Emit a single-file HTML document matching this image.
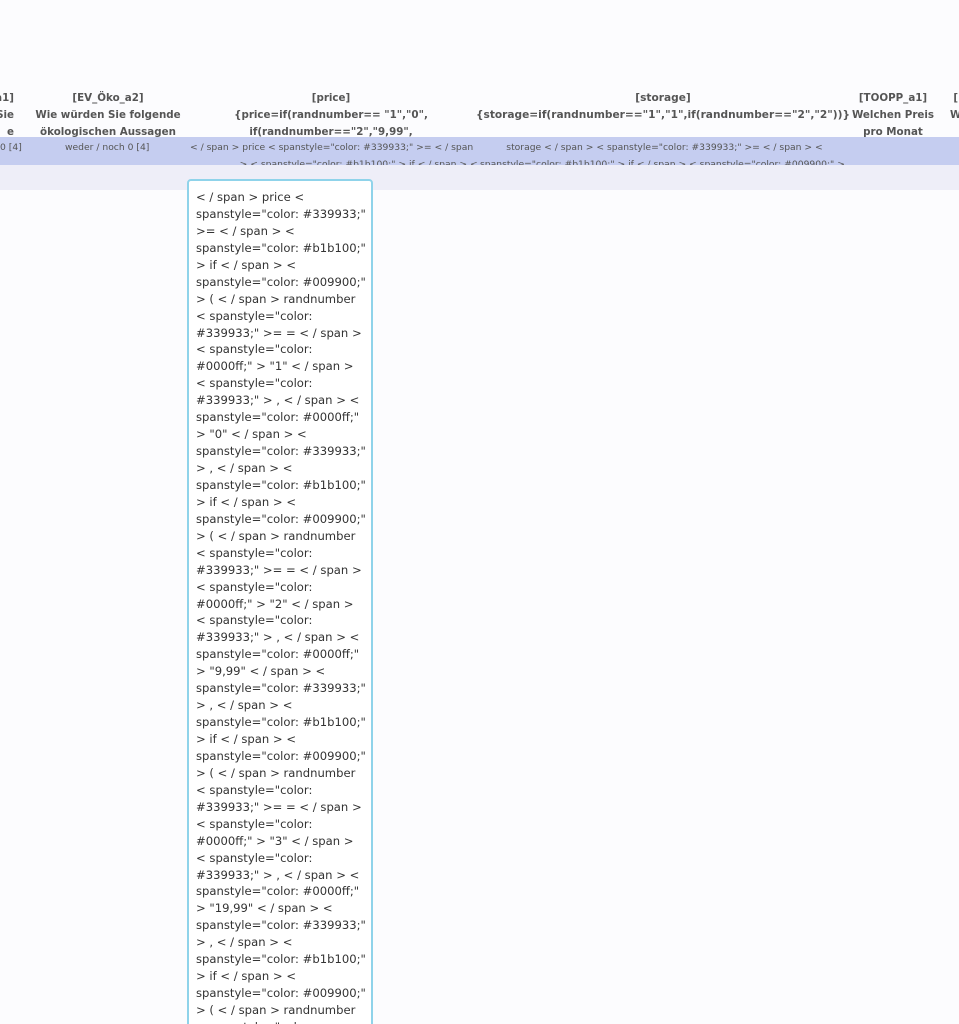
<!DOCTYPE html>
<html style="overflow:hidden;height:1024px"><head><meta charset="utf-8">
<style>
body{margin:0;width:959px;height:1024px;overflow:hidden;background:#fcfcfe;font-family:"DejaVu Sans","Liberation Sans",sans-serif;position:relative}
.h{position:absolute;font-weight:bold;font-size:10.3px;color:#555;text-align:center;line-height:17px;white-space:nowrap;transform:translateX(-50%)}
.blue{position:absolute;left:0;top:137px;width:959px;height:28px;background:#c5cdf0;overflow:hidden}
.lav{position:absolute;left:0;top:165px;width:959px;height:25px;background:#eeeef8}
.c{position:absolute;font-size:9.2px;color:#555;line-height:17px;white-space:nowrap;top:2px}
.tip{position:absolute;left:187px;top:179px;width:186px;height:860px;background:#fff;border:2px solid #8fd3ea;border-radius:4px;box-sizing:border-box;padding:8px 0 0 7px;font-size:11.6px;line-height:16.94px;color:#333;white-space:nowrap;overflow:hidden}
</style></head><body>
<div class="h" style="top:90px;text-align:right;transform:none;left:-20px;width:34px">a1]<br>Sie<br>e</div>
<div class="h" style="left:108px;top:90px">[EV_Öko_a2]<br>Wie würden Sie folgende<br>ökologischen Aussagen</div>
<div class="h" style="left:331px;top:90px">[price]<br>{price=if(randnumber== "1","0",<br>if(randnumber=="2","9,99",</div>
<div class="h" style="left:663px;top:90px;font-size:10.6px">[storage]<br>{storage=if(randnumber=="1","1",if(randnumber=="2","2"))}</div>
<div class="h" style="left:893px;top:90px">[TOOPP_a1]<br>Welchen Preis<br>pro Monat</div>
<div class="h" style="left:950px;top:90px;transform:none">[<br>W</div>
<div class="blue">
<div class="c" style="left:0">0 [4]</div>
<div class="c" style="left:65px">weder / noch 0 [4]</div>
<div class="c" style="left:190px">&lt; / span &gt; price &lt; spanstyle="color: #339933;" &gt;= &lt; / span<br>&nbsp;&nbsp;&nbsp;&nbsp;&nbsp;&nbsp;&nbsp;&nbsp;&nbsp;&nbsp;&nbsp;&nbsp;&nbsp;&nbsp;&nbsp;&nbsp;&nbsp;&gt; &lt; spanstyle="color: #b1b100;" &gt; if &lt; / span &gt; &lt;</div>
<div class="c" style="left:480px">&nbsp;&nbsp;&nbsp;&nbsp;&nbsp;&nbsp;&nbsp;&nbsp;&nbsp;storage &lt; / span &gt; &lt; spanstyle="color: #339933;" &gt;= &lt; / span &gt; &lt;<br>spanstyle="color: #b1b100;" &gt; if &lt; / span &gt; &lt; spanstyle="color: #009900;" &gt;</div>
</div>
<div class="lav"></div>
<div class="tip">&lt; / span &gt; price &lt;<br>spanstyle="color: #339933;"<br>&gt;= &lt; / span &gt; &lt;<br>spanstyle="color: #b1b100;"<br>&gt; if &lt; / span &gt; &lt;<br>spanstyle="color: #009900;"<br>&gt; ( &lt; / span &gt; randnumber<br>&lt; spanstyle="color:<br>#339933;" &gt;= = &lt; / span &gt;<br>&lt; spanstyle="color:<br>#0000ff;" &gt; "1" &lt; / span &gt;<br>&lt; spanstyle="color:<br>#339933;" &gt; , &lt; / span &gt; &lt;<br>spanstyle="color: #0000ff;"<br>&gt; "0" &lt; / span &gt; &lt;<br>spanstyle="color: #339933;"<br>&gt; , &lt; / span &gt; &lt;<br>spanstyle="color: #b1b100;"<br>&gt; if &lt; / span &gt; &lt;<br>spanstyle="color: #009900;"<br>&gt; ( &lt; / span &gt; randnumber<br>&lt; spanstyle="color:<br>#339933;" &gt;= = &lt; / span &gt;<br>&lt; spanstyle="color:<br>#0000ff;" &gt; "2" &lt; / span &gt;<br>&lt; spanstyle="color:<br>#339933;" &gt; , &lt; / span &gt; &lt;<br>spanstyle="color: #0000ff;"<br>&gt; "9,99" &lt; / span &gt; &lt;<br>spanstyle="color: #339933;"<br>&gt; , &lt; / span &gt; &lt;<br>spanstyle="color: #b1b100;"<br>&gt; if &lt; / span &gt; &lt;<br>spanstyle="color: #009900;"<br>&gt; ( &lt; / span &gt; randnumber<br>&lt; spanstyle="color:<br>#339933;" &gt;= = &lt; / span &gt;<br>&lt; spanstyle="color:<br>#0000ff;" &gt; "3" &lt; / span &gt;<br>&lt; spanstyle="color:<br>#339933;" &gt; , &lt; / span &gt; &lt;<br>spanstyle="color: #0000ff;"<br>&gt; "19,99" &lt; / span &gt; &lt;<br>spanstyle="color: #339933;"<br>&gt; , &lt; / span &gt; &lt;<br>spanstyle="color: #b1b100;"<br>&gt; if &lt; / span &gt; &lt;<br>spanstyle="color: #009900;"<br>&gt; ( &lt; / span &gt; randnumber<br>&lt; spanstyle="color:</div>
</body></html>
